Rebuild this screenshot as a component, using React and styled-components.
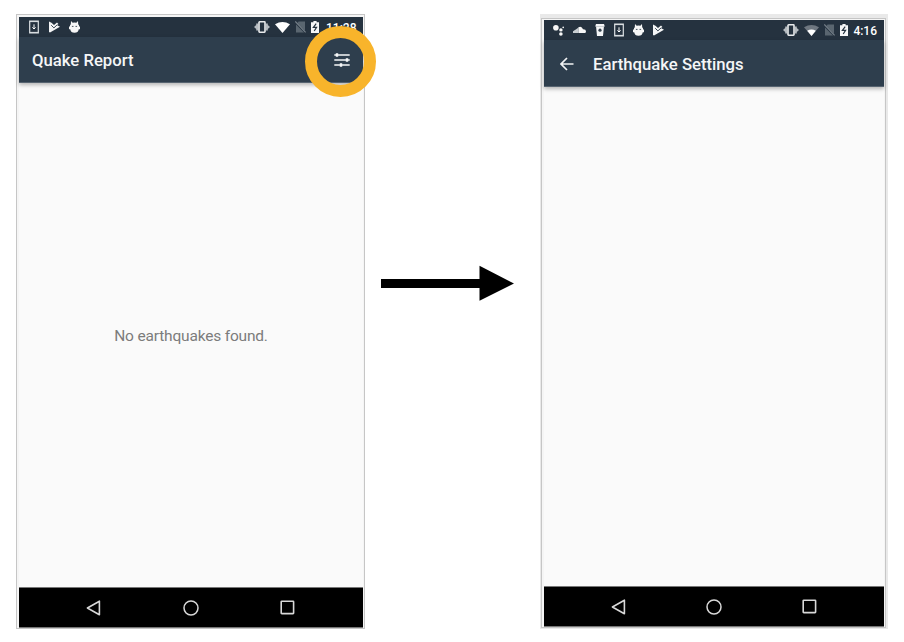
import React from "react";
import styled, { createGlobalStyle } from "styled-components";

const GlobalStyle = createGlobalStyle`
  *, *::before, *::after { box-sizing: border-box; }
  body { margin: 0; background: #fff; font-family: Roboto, "Liberation Sans", sans-serif; }
  svg { display: block; flex: none; }
`;

const Page = styled.main`
  width: 904px;
  height: 642px;
  display: flex;
  align-items: flex-start;
  padding: 14px 16px 0;
  overflow: hidden;
`;

const Bezel = styled.div`
  flex: none;
  background: #e9e9e9;
  padding: ${(p) => (p.$wide ? "4px 2px 1px 1px" : "0")};
`;

const Frame = styled.section`
  position: relative;
  display: flex;
  flex-direction: column;
  width: ${(p) => p.$width}px;
  height: ${(p) => p.$height}px;
  padding: ${(p) => p.$inset};
  border: 1px solid #c6c6c6;
  background: #f5f5f5;
`;

const StatusBar = styled.div`
  flex: none;
  display: flex;
  align-items: center;
  height: 20px;
  padding: 0 7px 0 ${(p) => p.$start}px;
  background: #25323f;
  color: #fff;
`;

const StatusGroup = styled.div`
  display: flex;
  align-items: center;
  gap: ${(p) => p.$gap}px;
  & + & { margin-left: auto; }
`;

const Clock = styled.span`
  width: ${(p) => p.$width}px;
  margin-left: ${(p) => p.$offset || 0}px;
  font-size: 12px;
  line-height: 14px;
  padding-top: 1px;
  text-align: right;
  font-weight: 500;
  white-space: nowrap;
`;

const Toolbar = styled.header`
  position: relative;
  flex: none;
  display: flex;
  align-items: center;
  height: ${(p) => p.$height}px;
  padding: 2px 13px 0 ${(p) => p.$start}px;
  background: #2e3e4d;
  border-bottom: 1px solid #566370;
  box-shadow: 0 2px 4px rgba(0, 0, 0, 0.28);
  color: #f5f6f7;
`;

const Title = styled.h1`
  margin: 1px 0 0 ${(p) => p.$indent || 0}px;
  font-size: 16.7px;
  line-height: 22px;
  font-weight: 500;
  white-space: nowrap;
`;

const Content = styled.div`
  flex: 1;
  display: flex;
  align-items: center;
  justify-content: center;
  background: #fafafa;
`;

const EmptyMessage = styled.p`
  margin: 2px 0 0;
  font-size: 15.5px;
  letter-spacing: -0.18px;
  line-height: 20px;
  color: #7c7c7c;
`;

const NavBar = styled.nav`
  flex: none;
  display: flex;
  justify-content: space-between;
  align-items: center;
  height: 41px;
  padding: 0 ${(p) => p.$right}px 0 ${(p) => p.$left}px;
  background: #000;
  border-top: 1px solid #777;
  border-bottom: 1px solid #777;
`;

const SettingsButton = styled.span`
  margin: 0 0 2px auto;
`;

const Highlight = styled.span`
  position: absolute;
  left: 288px;
  top: 11px;
  width: 71px;
  height: 71px;
  border: 12px solid #f8b42b;
  border-radius: 50%;
`;

const FlowArrow = styled.svg`
  margin: 251px 26px 0 16px;
`;

const DownloadIcon = () => (
  <svg width="10" height="14" viewBox="0 0 10 14">
    <path d="M.7 1.2h8.6v11.6H.7Z" fill="none" stroke="#dce0e3" strokeWidth="1.2" />
    <path d="M.7 1.6h8.6M.7 12.4h8.6" stroke="#dce0e3" />
    <path d="M5 4.3v4.2M3.4 7.4 5 9l1.6-1.6" fill="none" stroke="#fff" />
  </svg>
);

const PlayCheckIcon = () => (
  <svg width="11" height="12" viewBox="0 0 11 12">
    <path d="M0 .4 2.5 1.7 5 4.1 8 1.5 9.4 2.9 8.2 4.2 11 5.8 1 11.6 0 11Z" fill="#f4f5f6" />
    <path d="m2.2 4.2 2.7 2.7 3.5-3.3" fill="none" stroke="#25323f" strokeWidth=".9" />
  </svg>
);

const RobotIcon = () => (
  <svg width="11" height="12" viewBox="0 0 11 12">
    <path d="M2 0 3.7 1.7Q5.5 1.2 7.3 1.7L9 0 9.2 3.2 10 4.3V5.5H11V8.3H9.8Q9.2 11.8 5.5 11.8T1.2 8.3H0V5.5H1V4.3L1.8 3.2Z" fill="#f7f7f7" />
    <path d="M2.9 5.4h1.6M6.5 5.4h1.6" stroke="#4b5762" />
  </svg>
);

const VibrateIcon = () => (
  <svg width="16" height="12" viewBox="0 0 16 12">
    <path d="M2.2 2.6h2v6.8h-2V8L0 6l2.2-2ZM13.8 2.6h-2v6.8h2V8L16 6l-2.2-2Z" fill="#b6bcc1" />
    <rect x="5" y=".8" width="6" height="10.4" rx=".6" fill="#25323f" stroke="#e9ebed" strokeWidth="1.6" />
  </svg>
);

const WifiIcon = ({ weak }) => (
  <svg width="15" height="11" viewBox="0 0 15 11">
    <path d="M0 2.3Q7.5-2.2 15 2.3L7.5 11Z" fill={weak ? "#6e7780" : "#fff"} />
    {weak && <path d="M3.2 5.8Q7.5 3 11.8 5.8L7.5 11Z" fill="#fff" />}
  </svg>
);

const NoSimIcon = () => (
  <svg width="11" height="12" viewBox="0 0 11 12">
    <path d="M3.6.6H10v9.2L2.4 2ZM1 3.4 9 11.5H1Z" fill="#5a6670" />
    <path d="m.3.5 10.3 10.9" stroke="#78828b" strokeWidth="1.1" />
  </svg>
);

const BatteryIcon = () => (
  <svg width="8" height="12" viewBox="0 0 8 12">
    <path d="M2.4 0h3.2v1.2H8V12H0V1.2h2.4Z" fill="#f5f6f7" />
    <path d="M5.2 2.7 2.4 6.3h3.2L3.2 10" fill="none" stroke="#25323f" strokeWidth="1.2" />
  </svg>
);

const AssistantIcon = () => (
  <svg width="11" height="12" viewBox="0 0 11 12" fill="#f7f7f7">
    <circle cx="2.9" cy="3.8" r="2.8" />
    <circle cx="7.9" cy="5.9" r="1.7" />
    <circle cx="10.2" cy="3.4" r=".8" />
    <circle cx="7.9" cy="10" r="1.8" />
  </svg>
);

const CloudIcon = () => (
  <svg width="13" height="8" viewBox="0 0 13 8">
    <path d="M5.4 7V1.2Q8.7-.5 10 3.2 13 3.1 13 5.2T11.2 7Z" fill="#f7f7f7" />
    <path d="M0 7V5.2L2.4 3.7 5.6 1.4V7Z" fill="#c9ced2" />
  </svg>
);

const CupIcon = () => (
  <svg width="10" height="12" viewBox="0 0 10 12">
    <path d="M1 0h8L9.7 2.2 8.9 3 8 12H2L1.1 3 .3 2.2Z" fill="#f4f5f6" />
    <path d="M1 2.5h8" stroke="#aab1b7" strokeWidth=".6" />
    <circle cx="5" cy="6.2" r="1.6" fill="#35424e" />
  </svg>
);

const TuneIcon = () => (
  <svg width="16" height="14" viewBox="0 0 16 14" fill="#f6f7f8" stroke="#f6f7f8">
    <path d="M.3 2h15.4M.3 7h15.4M.3 12h15.4" strokeWidth="1.5" />
    <path d="M3 .3v3.4M13 5.3v3.4M7 10.3v3.4" strokeWidth="2.4" />
  </svg>
);

const BackIcon = () => (
  <svg width="14" height="14" viewBox="0 0 14 14">
    <path d="M13.5 7H1.5M7 1 1 7l6 6" fill="none" stroke="#f2f3f4" strokeWidth="1.7" />
  </svg>
);

const NavIcons = () => (
  <>
    <svg width="15" height="16" viewBox="0 0 15 16">
      <path d="M13.4 1.2v13.6L1.4 8Z" fill="none" stroke="#d8d8d8" strokeWidth="1.6" strokeLinejoin="round" />
    </svg>
    <svg width="16" height="16" viewBox="0 0 16 16">
      <circle cx="8" cy="8" r="7" fill="none" stroke="#d8d8d8" strokeWidth="1.5" />
    </svg>
    <svg width="15" height="15" viewBox="0 0 15 15">
      <rect x="1.2" y="1.2" width="12.4" height="12.4" rx=".6" fill="none" stroke="#d8d8d8" strokeWidth="1.6" />
    </svg>
  </>
);

export default function App() {
  return (
    <Page>
      <GlobalStyle />
      <Bezel>
        <Frame $width={349} $height={615} $inset="2px 1px 0 2px">
          <StatusBar $start={10}>
            <StatusGroup $gap={9.5}>
              <DownloadIcon />
              <PlayCheckIcon />
              <RobotIcon />
            </StatusGroup>
            <StatusGroup $gap={5}>
              <VibrateIcon />
              <WifiIcon />
              <NoSimIcon />
              <BatteryIcon />
              <Clock $width={30} $offset={2}>11:28</Clock>
            </StatusGroup>
          </StatusBar>
          <Toolbar $height={46} $start={13}>
            <Title>Quake Report</Title>
            <SettingsButton>
              <TuneIcon />
            </SettingsButton>
          </Toolbar>
          <Content>
            <EmptyMessage>No earthquakes found.</EmptyMessage>
          </Content>
          <NavBar $left={67} $right={68}>
            <NavIcons />
          </NavBar>
          <Highlight />
        </Frame>
      </Bezel>
      <FlowArrow width="133" height="36" viewBox="0 0 133 36">
        <path d="M0 14h98.5V.8L133 18.5 98.5 35.8V23H0Z" fill="#000" />
      </FlowArrow>
      <Bezel $wide>
        <Frame $width={345} $height={610} $inset="1px 1px 0 2px">
          <StatusBar $start={9}>
            <StatusGroup $gap={9}>
              <AssistantIcon />
              <CloudIcon />
              <CupIcon />
              <DownloadIcon />
              <RobotIcon />
              <PlayCheckIcon />
            </StatusGroup>
            <StatusGroup $gap={5}>
              <VibrateIcon />
              <WifiIcon weak />
              <NoSimIcon />
              <BatteryIcon />
              <Clock $width={24}>4:16</Clock>
            </StatusGroup>
          </StatusBar>
          <Toolbar $height={47} $start={16}>
            <BackIcon />
            <Title $indent={19}>Earthquake Settings</Title>
          </Toolbar>
          <Content />
          <NavBar $left={67} $right={67}>
            <NavIcons />
          </NavBar>
        </Frame>
      </Bezel>
    </Page>
  );
}
